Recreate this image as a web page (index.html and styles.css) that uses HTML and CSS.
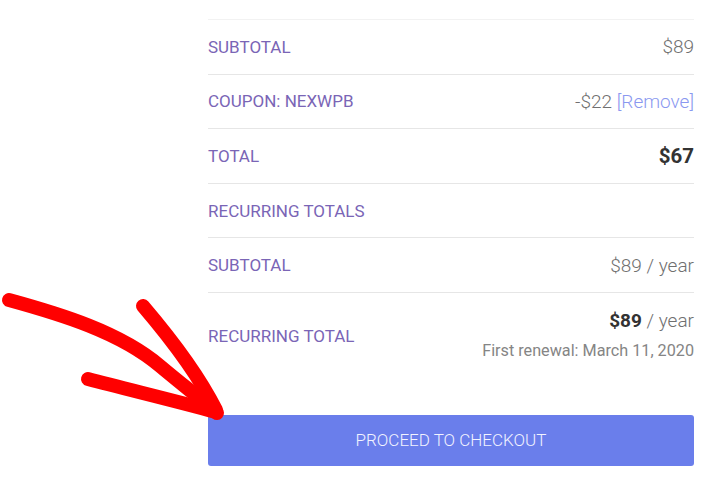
FILE: index.html
```html
<!DOCTYPE html>
<html>
<head>
<meta charset="utf-8">
<link rel="stylesheet" href="styles.css">
</head>
<body>
<div class="page">
  <div class="totals">
    <div class="row">
      <span class="label">SUBTOTAL</span>
      <span class="value">$89</span>
    </div>
    <div class="row">
      <span class="label">COUPON: NEXWPB</span>
      <span class="value">-$22 <a class="remove">[Remove]</a></span>
    </div>
    <div class="row">
      <span class="label">TOTAL</span>
      <span class="value"><b class="strong big">$67</b></span>
    </div>
    <div class="row">
      <span class="label">RECURRING TOTALS</span>
    </div>
    <div class="row">
      <span class="label">SUBTOTAL</span>
      <span class="value">$89 / year</span>
    </div>
    <div class="row tall">
      <span class="label">RECURRING TOTAL</span>
      <div class="value stack">
        <span><b class="strong">$89</b> / year</span>
        <span class="renewal">First renewal: March 11, 2020</span>
      </div>
    </div>
    <button class="checkout">PROCEED TO CHECKOUT</button>
  </div>
  <svg class="arrow" width="240" height="440" viewBox="0 0 240 440">
    <g fill="none" stroke="#ff0000" stroke-width="14" stroke-linecap="round" stroke-linejoin="round">
      <path d="M9 300 C 60 314, 120 332, 160 366 C 185 387, 205 402, 217 413"/>
      <path d="M143 306 C 172 340, 200 378, 216 410"/>
      <path d="M88 379 C 130 390, 180 402, 216 412"/>
    </g>
  </svg>
</div>
</body>
</html>
```
FILE: styles.css
```css
html, body {
  margin: 0;
  padding: 0;
  background: #ffffff;
}
.page {
  position: relative;
  width: 713px;
  height: 500px;
  overflow: hidden;
  font-family: Roboto, "Liberation Sans", sans-serif;
}
.totals {
  margin-left: 208px;
  width: 486px;
  padding-top: 19px;
  display: flex;
  flex-direction: column;
}
.row {
  display: flex;
  justify-content: space-between;
  align-items: center;
  height: 53.6px;
  border-top: 1px solid #e6e6e6;
}
.row:first-child {
  border-top-color: #f2f2f2;
}
.row.tall {
  height: 86px;
}
.label {
  color: #7a65b6;
  font-size: 17px;
  font-weight: 400;
}
.value {
  color: #707070;
  text-align: right;
  font-size: 19px;
  font-weight: 300;
}
.strong {
  color: #333333;
  font-weight: 700;
}
.big {
  font-size: 20.5px;
}
.remove {
  color: #8a98f0;
}
.stack {
  display: flex;
  flex-direction: column;
  align-items: flex-end;
  gap: 9px;
  margin-top: -2px;
}
.renewal {
  font-size: 16.2px;
  font-weight: 400;
  color: #858585;
}
.checkout {
  margin-top: 36px;
  height: 51px;
  border: none;
  border-radius: 3px;
  background: #6a7eeb;
  color: #f2f3ff;
  font-family: Roboto, "Liberation Sans", sans-serif;
  font-size: 17px;
  font-weight: 300;
  padding: 0;
}
.arrow {
  position: absolute;
  left: 0;
  top: 0;
}
```
